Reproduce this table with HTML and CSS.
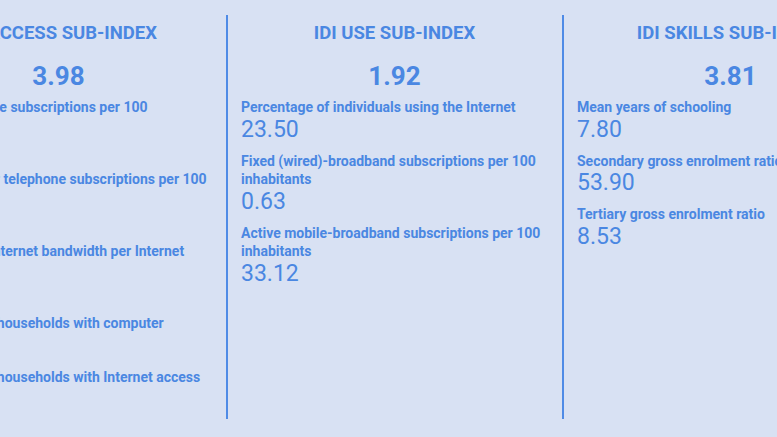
FILE: index.html
```html
<!DOCTYPE html>
<html>
<head>
<meta charset="utf-8">
<link rel="stylesheet" href="styles.css">
</head>
<body>
<div class="row">
  <section class="col">
    <h2 class="title">IDI ACCESS SUB-INDEX</h2>
    <div class="score">3.98</div>
    <div class="items">
      <div class="item"><div class="label">Fixed-telephone subscriptions per 100 inhabitants</div><div class="value">0.00</div></div>
      <div class="item"><div class="label">Mobile-cellular telephone subscriptions per 100 inhabitants</div><div class="value">0.00</div></div>
      <div class="item"><div class="label">International Internet bandwidth per Internet user</div><div class="value">0.00</div></div>
      <div class="item"><div class="label">Percentage of households with computer</div><div class="value">0.00</div></div>
      <div class="item"><div class="label">Percentage of households with Internet access</div><div class="value">0.00</div></div>
    </div>
  </section>
  <section class="col">
    <h2 class="title">IDI USE SUB-INDEX</h2>
    <div class="score">1.92</div>
    <div class="items">
      <div class="item"><div class="label">Percentage of individuals using the Internet</div><div class="value">23.50</div></div>
      <div class="item"><div class="label">Fixed (wired)-broadband subscriptions per 100 inhabitants</div><div class="value">0.63</div></div>
      <div class="item"><div class="label">Active mobile-broadband subscriptions per 100 inhabitants</div><div class="value">33.12</div></div>
    </div>
  </section>
  <section class="col">
    <h2 class="title">IDI SKILLS SUB-INDEX</h2>
    <div class="score">3.81</div>
    <div class="items">
      <div class="item"><div class="label">Mean years of schooling</div><div class="value">7.80</div></div>
      <div class="item"><div class="label">Secondary gross enrolment ratio</div><div class="value">53.90</div></div>
      <div class="item"><div class="label">Tertiary gross enrolment ratio</div><div class="value">8.53</div></div>
    </div>
  </section>
</div>
</body>
</html>
```

FILE: styles.css
```css
html, body {
  margin: 0;
  padding: 0;
  background: #d8e1f3;
  overflow: hidden;
}
body {
  width: 777px;
  height: 437px;
  font-family: Roboto, "Liberation Sans", sans-serif;
  color: #4a87e2;
}
.row {
  display: flex;
  margin-left: -110px;
  padding-top: 15px;
}
.col {
  flex: 0 0 336px;
  box-sizing: border-box;
  height: 404px;
  border-left: 2px solid #4f8be6;
  padding: 8px 14px 0 13px;
  white-space: nowrap;
}
.col .label { white-space: normal; }
.title {
  margin: 0;
  font-size: 18.5px;
  line-height: 20px;
  font-weight: 700;
  text-align: center;
}
.score {
  margin-top: 18px;
  font-size: 26px;
  line-height: 30px;
  font-weight: 700;
  text-align: center;
}
.items {
  margin-top: 7px;
  display: flex;
  flex-direction: column;
  gap: 9px;
}
.label {
  font-size: 14px;
  line-height: 18.5px;
  font-weight: 700;
}
.value {
  font-size: 23px;
  line-height: 26px;
  font-weight: 400;
}
```
